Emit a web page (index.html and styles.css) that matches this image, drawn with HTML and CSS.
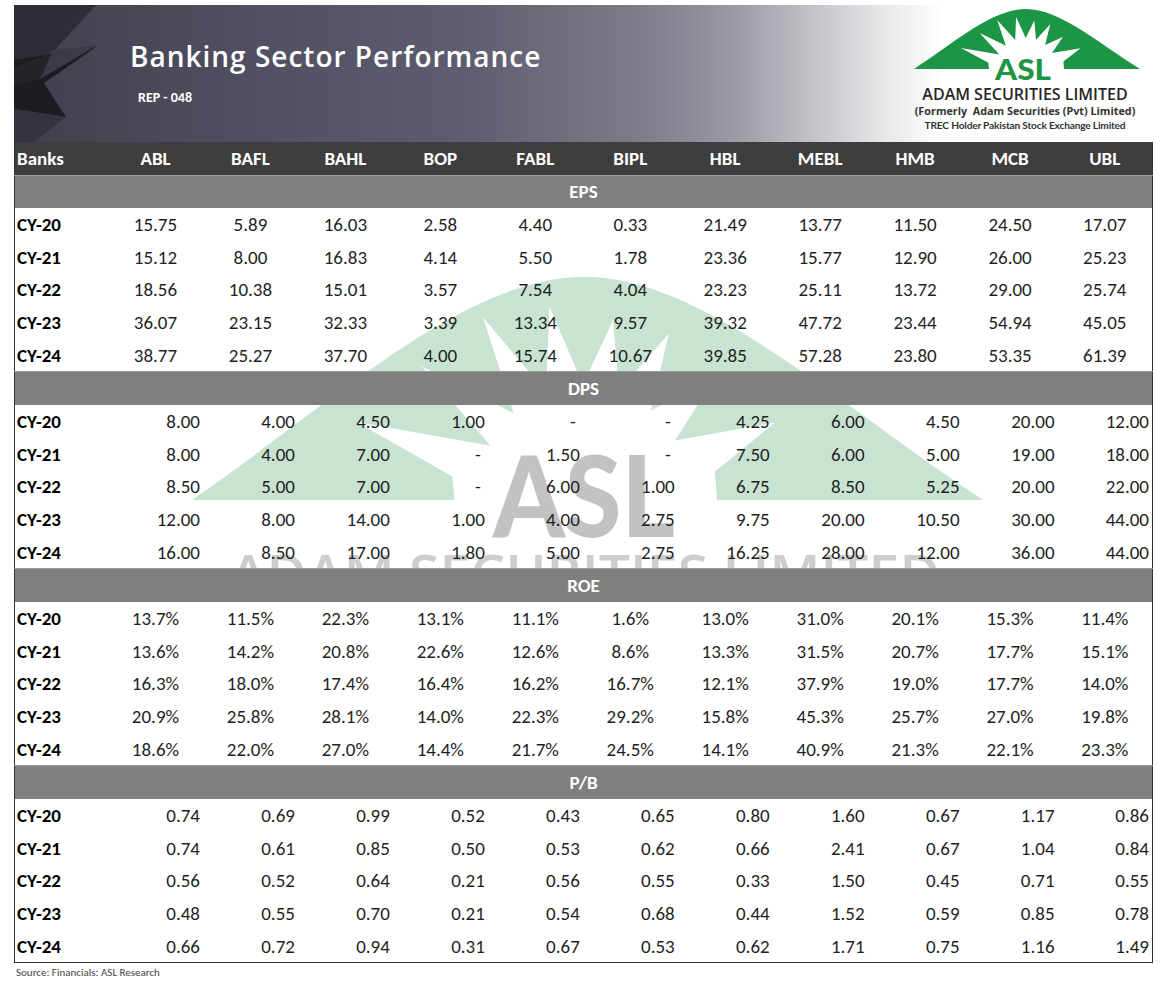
FILE: index.html
```html
<!DOCTYPE html>
<html>
<head>
<meta charset="utf-8">
<link rel="stylesheet" href="styles.css">
</head>
<body>
<div class="page">
  <header class="banner">
    <svg class="shards" viewBox="0 0 100 137" width="100" height="137">
      <polygon points="0,0 82,0 38,48 0,62" fill="#2d2d36"/>
      <polygon points="0,55 82,42 30,78 52,112 0,104" fill="#1c1c22"/>
      <polygon points="36,46 84,40 26,74" fill="#3b3b47"/>
      <polygon points="0,104 52,112 20,137 0,137" fill="#33333d"/>
      <polygon points="0,62 38,48 26,74 0,80" fill="#24242b"/>
    </svg>
    <div class="titles">
      <h1 class="title">Banking Sector Performance</h1>
      <div class="rep">REP - 048</div>
    </div>
    <div class="brand">
      <svg class="logo" viewBox="0 0 228 84" width="228" height="84">
        <path d="M0,64 C40,38 78,4 112,4 C146,4 184,38 226,64 Z" fill="#1c9645"/>
        <polygon points="75,64 74.4,57.7 47,43 85.3,49.4 65.7,28.1 91.9,40.7 83.2,15 101.2,35 102.1,12 111.7,33 120.3,15.7 122,34.7 136.2,19.3 131.1,39.9 148.8,32.1 138,48 166.5,43.2 149.4,56.4 150,64" fill="#fff"/>
        <text x="81" y="75" textLength="56" lengthAdjust="spacingAndGlyphs" class="logo-asl">ASL</text>
      </svg>
      <div class="brand-name">ADAM SECURITIES LIMITED</div>
      <div class="brand-sub">(Formerly&nbsp; Adam Securities (Pvt) Limited)</div>
      <div class="brand-trec">TREC Holder Pakistan Stock Exchange Limited</div>
    </div>
  </header>

  <div class="table-wrap">
    <svg class="watermark" viewBox="14 142 1139 820" width="1139" height="820">
      <g transform="translate(192,500) scale(3.5,3.72) translate(0,-64)">
        <path d="M0,64 C40,38 78,4 112,4 C146,4 184,38 226,64 Z" fill="#c9e3d3"/>
        <polygon points="75,64 74.4,57.7 47,43 85.3,49.4 65.7,28.1 91.9,40.7 83.2,15 101.2,35 102.1,12 111.7,33 120.3,15.7 122,34.7 136.2,19.3 131.1,39.9 148.8,32.1 138,48 166.5,43.2 149.4,56.4 150,64" fill="#fff"/>
        <text x="86" y="74" textLength="52" lengthAdjust="spacingAndGlyphs" class="wm-asl">ASL</text>
      </g>
      <text x="585" y="594" text-anchor="middle" textLength="710" lengthAdjust="spacingAndGlyphs" class="wm-name">ADAM SECURITIES LIMITED</text>
    </svg>
    <table class="data">
      <colgroup>
        <col class="c-label">
        <col><col><col><col><col><col><col><col><col><col><col>
      </colgroup>
      <thead>
        <tr class="head">
          <th class="lab">Banks</th><th>ABL</th><th>BAFL</th><th>BAHL</th><th>BOP</th><th>FABL</th><th>BIPL</th><th>HBL</th><th>MEBL</th><th>HMB</th><th>MCB</th><th>UBL</th>
        </tr>
      </thead>
      <tbody class="center">
        <tr class="band"><td colspan="12">EPS</td></tr>
        <tr><th class="lab">CY-20</th><td>15.75</td><td>5.89</td><td>16.03</td><td>2.58</td><td>4.40</td><td>0.33</td><td>21.49</td><td>13.77</td><td>11.50</td><td>24.50</td><td>17.07</td></tr>
        <tr><th class="lab">CY-21</th><td>15.12</td><td>8.00</td><td>16.83</td><td>4.14</td><td>5.50</td><td>1.78</td><td>23.36</td><td>15.77</td><td>12.90</td><td>26.00</td><td>25.23</td></tr>
        <tr><th class="lab">CY-22</th><td>18.56</td><td>10.38</td><td>15.01</td><td>3.57</td><td>7.54</td><td>4.04</td><td>23.23</td><td>25.11</td><td>13.72</td><td>29.00</td><td>25.74</td></tr>
        <tr><th class="lab">CY-23</th><td>36.07</td><td>23.15</td><td>32.33</td><td>3.39</td><td>13.34</td><td>9.57</td><td>39.32</td><td>47.72</td><td>23.44</td><td>54.94</td><td>45.05</td></tr>
        <tr><th class="lab">CY-24</th><td>38.77</td><td>25.27</td><td>37.70</td><td>4.00</td><td>15.74</td><td>10.67</td><td>39.85</td><td>57.28</td><td>23.80</td><td>53.35</td><td>61.39</td></tr>
      </tbody>
      <tbody class="right">
        <tr class="band"><td colspan="12">DPS</td></tr>
        <tr><th class="lab">CY-20</th><td>8.00</td><td>4.00</td><td>4.50</td><td>1.00</td><td class="dash">-</td><td class="dash">-</td><td>4.25</td><td>6.00</td><td>4.50</td><td>20.00</td><td>12.00</td></tr>
        <tr><th class="lab">CY-21</th><td>8.00</td><td>4.00</td><td>7.00</td><td class="dash">-</td><td>1.50</td><td class="dash">-</td><td>7.50</td><td>6.00</td><td>5.00</td><td>19.00</td><td>18.00</td></tr>
        <tr><th class="lab">CY-22</th><td>8.50</td><td>5.00</td><td>7.00</td><td class="dash">-</td><td>6.00</td><td>1.00</td><td>6.75</td><td>8.50</td><td>5.25</td><td>20.00</td><td>22.00</td></tr>
        <tr><th class="lab">CY-23</th><td>12.00</td><td>8.00</td><td>14.00</td><td>1.00</td><td>4.00</td><td>2.75</td><td>9.75</td><td>20.00</td><td>10.50</td><td>30.00</td><td>44.00</td></tr>
        <tr><th class="lab">CY-24</th><td>16.00</td><td>8.50</td><td>17.00</td><td>1.80</td><td>5.00</td><td>2.75</td><td>16.25</td><td>28.00</td><td>12.00</td><td>36.00</td><td>44.00</td></tr>
      </tbody>
      <tbody class="center">
        <tr class="band"><td colspan="12">ROE</td></tr>
        <tr><th class="lab">CY-20</th><td>13.7%</td><td>11.5%</td><td>22.3%</td><td>13.1%</td><td>11.1%</td><td>1.6%</td><td>13.0%</td><td>31.0%</td><td>20.1%</td><td>15.3%</td><td>11.4%</td></tr>
        <tr><th class="lab">CY-21</th><td>13.6%</td><td>14.2%</td><td>20.8%</td><td>22.6%</td><td>12.6%</td><td>8.6%</td><td>13.3%</td><td>31.5%</td><td>20.7%</td><td>17.7%</td><td>15.1%</td></tr>
        <tr><th class="lab">CY-22</th><td>16.3%</td><td>18.0%</td><td>17.4%</td><td>16.4%</td><td>16.2%</td><td>16.7%</td><td>12.1%</td><td>37.9%</td><td>19.0%</td><td>17.7%</td><td>14.0%</td></tr>
        <tr><th class="lab">CY-23</th><td>20.9%</td><td>25.8%</td><td>28.1%</td><td>14.0%</td><td>22.3%</td><td>29.2%</td><td>15.8%</td><td>45.3%</td><td>25.7%</td><td>27.0%</td><td>19.8%</td></tr>
        <tr><th class="lab">CY-24</th><td>18.6%</td><td>22.0%</td><td>27.0%</td><td>14.4%</td><td>21.7%</td><td>24.5%</td><td>14.1%</td><td>40.9%</td><td>21.3%</td><td>22.1%</td><td>23.3%</td></tr>
      </tbody>
      <tbody class="right">
        <tr class="band"><td colspan="12">P/B</td></tr>
        <tr><th class="lab">CY-20</th><td>0.74</td><td>0.69</td><td>0.99</td><td>0.52</td><td>0.43</td><td>0.65</td><td>0.80</td><td>1.60</td><td>0.67</td><td>1.17</td><td>0.86</td></tr>
        <tr><th class="lab">CY-21</th><td>0.74</td><td>0.61</td><td>0.85</td><td>0.50</td><td>0.53</td><td>0.62</td><td>0.66</td><td>2.41</td><td>0.67</td><td>1.04</td><td>0.84</td></tr>
        <tr><th class="lab">CY-22</th><td>0.56</td><td>0.52</td><td>0.64</td><td>0.21</td><td>0.56</td><td>0.55</td><td>0.33</td><td>1.50</td><td>0.45</td><td>0.71</td><td>0.55</td></tr>
        <tr><th class="lab">CY-23</th><td>0.48</td><td>0.55</td><td>0.70</td><td>0.21</td><td>0.54</td><td>0.68</td><td>0.44</td><td>1.52</td><td>0.59</td><td>0.85</td><td>0.78</td></tr>
        <tr><th class="lab">CY-24</th><td>0.66</td><td>0.72</td><td>0.94</td><td>0.31</td><td>0.67</td><td>0.53</td><td>0.62</td><td>1.71</td><td>0.75</td><td>1.16</td><td>1.49</td></tr>
      </tbody>
    </table>
  </div>
  <p class="source">Source: Financials: ASL Research</p>
</div>
</body>
</html>
```

FILE: styles.css
```css
* { box-sizing: border-box; }
html, body { margin: 0; padding: 0; background: #fff; }
body { font-family: Carlito, Lato, "Liberation Sans", sans-serif; color: #1f1f1f; }

.page { padding: 5px 0 0 14px; width: 1174px; }

.banner {
  position: relative;
  display: flex;
  align-items: flex-start;
  width: 1146px;
  height: 137px;
  background: linear-gradient(90deg, #3f3f4d 0%, #4f4f61 20%, #5e5e70 40%, #7d7d8b 55%, #9b9ba5 63%, #c4c4ca 70%, #e8e8ea 76%, #ffffff 81%);
}
.shards { position: absolute; left: 0; top: 0; }
.titles { position: relative; padding: 33px 0 0 116px; flex: 1; }
.title {
  margin: 0;
  font-family: "Open Sans", Lato, sans-serif;
  font-weight: 600;
  font-size: 28px;
  line-height: 36px;
  color: #fff;
  letter-spacing: 1px;
}
.rep {
  margin: 15px 0 0 8px;
  font-family: Carlito, Lato, sans-serif;
  font-weight: 700;
  font-size: 14px;
  color: #fff;
}

.brand {
  width: 240px;
  margin: 0 15px 0 0;
  display: flex;
  flex-direction: column;
  align-items: center;
  color: #2b2b2b;
}
.logo { display: block; margin: 0 0 -3px 6px; }
.logo-asl { font-family: Lato, sans-serif; font-weight: 900; font-size: 28px; fill: #1c9645; }
.brand-name {
  font-family: "Open Sans", sans-serif;
  font-weight: 600;
  font-size: 16px;
  line-height: 17px;
  color: #262626;
  white-space: nowrap;
}
.brand-sub {
  font-family: "Open Sans", sans-serif;
  font-weight: 700;
  font-size: 10.8px;
  line-height: 15px;
  color: #333;
  white-space: nowrap;
}
.brand-trec {
  margin-top: 1px;
  font-family: Lato, sans-serif;
  font-weight: 700;
  font-size: 10.2px;
  line-height: 13px;
  color: #333;
  letter-spacing: -0.2px;
  white-space: nowrap;
}

.table-wrap { position: relative; width: 1139px; }
.watermark { position: absolute; left: 0; top: 0; z-index: 0; }
.wm-asl { font-family: Lato, sans-serif; font-weight: 900; font-size: 30px; fill: #c2c2c2; }
.wm-name { font-family: "Open Sans", sans-serif; font-weight: 600; font-size: 54px; fill: #cdcdcd; }

.data {
  position: relative;
  z-index: 1;
  width: 1139px;
  border-collapse: collapse;
  table-layout: fixed;
  border-left: 1.5px solid #333;
  border-right: 1.5px solid #333;
  border-bottom: 1.5px solid #333;
  font-size: 19px;
}
.c-label { width: 93.5px; }
.data th, .data td { padding: 0; white-space: nowrap; }
.data tr { height: 32.8px; }
.head { background: #3e3e3e; color: #fff; }
.data tr.head { height: 33px; }
.head th { font-weight: 700; text-align: center; font-size: 19px; color: #fff; }
.head th.lab { text-align: left; padding-left: 2px; color: #fff; }
.data tr.band { height: 33px; }
.band td {
  background: #7f7f7f;
  color: #fff;
  font-weight: 700;
  text-align: center !important;
  padding: 0 !important;
  border-top: 1px solid #9a9a9a;
}
th.lab { text-align: left; padding-left: 2px; font-weight: 700; color: #000; }
.center td { text-align: center; }
.right td { text-align: right; padding-right: 3px; }
.right td.dash { padding-right: 7px; }

.source {
  margin: 3px 0 0 2px;
  font-family: Carlito, Lato, sans-serif;
  font-size: 11px;
  color: #444;
}
```
